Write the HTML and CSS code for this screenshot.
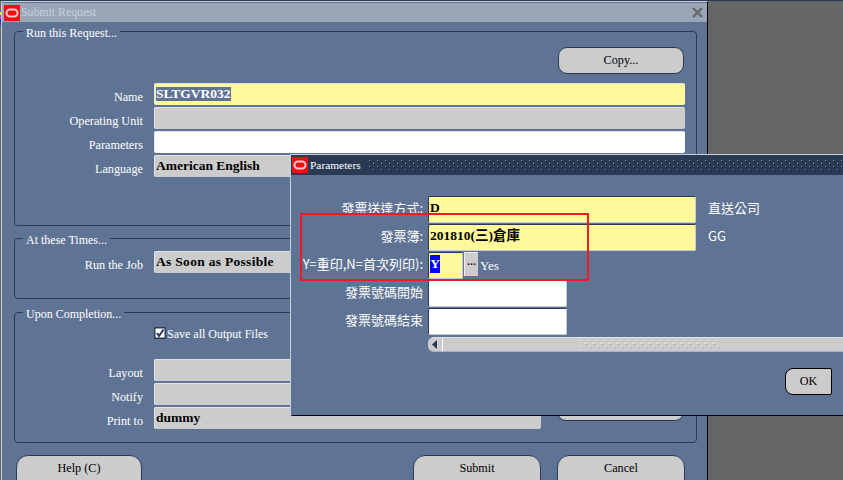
FILE: index.html
```html
<!DOCTYPE html>
<html lang="zh-Hant">
<head>
    <meta charset="UTF-8">
    <meta name="viewport" content="width=device-width, initial-scale=1.0">
    <title>Submit Request</title>
    <link rel="stylesheet" href="styles.css">
</head>
<body>
    <div class="desktop">
        <div class="edge-pixels"></div>

        <div class="window main-window">
            <div class="titlebar inactive">
                <svg class="oracle-icon" viewBox="0 0 16 16"><rect width="16" height="16" fill="#f00f0f"/><rect x="2.5" y="4.5" width="11" height="7" rx="3.5" fill="none" stroke="#ffc8c8" stroke-width="2"/></svg>
                <span class="title-text">Submit Request</span>
                <svg class="close-icon" viewBox="0 0 11 11"><path d="M1 1L10 10M10 1L1 10" stroke="#666" stroke-width="2.4" fill="none"/></svg>
            </div>
            <div class="main-body">
                <fieldset class="group group-run">
                    <legend>Run this Request...</legend>
                    <div class="copy-row"><button class="btn btn-copy">Copy...</button></div>
                    <div class="form-rows">
                        <div class="row"><label>Name</label><div class="field yellow bold"><span class="selected">SLTGVR032</span></div></div>
                        <div class="row"><label>Operating Unit</label><div class="field gray"></div></div>
                        <div class="row"><label>Parameters</label><div class="field white"></div></div>
                        <div class="row"><label>Language</label><div class="field gray bold">American English</div></div>
                    </div>
                </fieldset>

                <fieldset class="group group-times">
                    <legend>At these Times...</legend>
                    <div class="form-rows">
                        <div class="row"><label>Run the Job</label><div class="field gray bold wide-text">As Soon as Possible</div></div>
                    </div>
                </fieldset>

                <fieldset class="group group-done">
                    <legend>Upon Completion...</legend>
                    <div class="check-row">
                        <svg class="checkbox" viewBox="0 0 12 12"><rect width="12" height="12" fill="#2a3a55"/><rect x="1.5" y="1.5" width="9" height="9" fill="#fff"/><path d="M3 6L5 9L9.5 2.5" stroke="#2a3a55" stroke-width="2" fill="none"/></svg>
                        <span class="check-label">Save all Output Files</span>
                    </div>
                    <div class="done-grid">
                        <div class="form-rows">
                            <div class="row"><label>Layout</label><div class="field gray"></div></div>
                            <div class="row"><label>Notify</label><div class="field gray"></div></div>
                            <div class="row"><label>Print to</label><div class="field gray bold">dummy</div></div>
                        </div>
                        <button class="btn btn-options"></button>
                    </div>
                </fieldset>

                <div class="footer-buttons">
                    <button class="btn btn-help">Help (C)</button>
                    <span class="spacer"></span>
                    <button class="btn btn-wide">Submit</button>
                    <button class="btn btn-wide">Cancel</button>
                </div>
            </div>
        </div>

        <div class="window param-window">
            <div class="titlebar active">
                <svg class="oracle-icon" viewBox="0 0 16 16"><rect width="16" height="16" fill="#f00f0f"/><rect x="2.5" y="4.5" width="11" height="7" rx="3.5" fill="none" stroke="#ffc8c8" stroke-width="2"/></svg>
                <span class="title-text">Parameters</span>
                <span class="dots"></span>
            </div>
            <div class="param-body">
                <div class="param-row">
                    <label>發票送達方式:</label>
                    <div class="pfield pfield-long yellow bold">D</div>
                    <span class="desc">直送公司</span>
                </div>
                <div class="param-row">
                    <label>發票簿:</label>
                    <div class="pfield pfield-long yellow bold">201810(三)倉庫</div>
                    <span class="desc">GG</span>
                </div>
                <div class="param-row">
                    <label>Y=重印,N=首次列印):</label>
                    <div class="pfield pfield-short yellow bold"><span class="selected-blue">Y</span></div>
                    <button class="lov-btn">...</button>
                    <span class="yes-text">Yes</span>
                </div>
                <div class="param-row">
                    <label>發票號碼開始</label>
                    <div class="pfield pfield-mid white"></div>
                </div>
                <div class="param-row">
                    <label>發票號碼結束</label>
                    <div class="pfield pfield-mid white"></div>
                </div>
                <div class="scrollbar">
                    <div class="scroll-arrow"><svg viewBox="0 0 6 9" width="6" height="9"><path d="M5 0V9L0 4.5Z" fill="#2a3a55"/></svg></div>
                    <div class="scroll-track"><span class="scroll-grip"></span></div>
                </div>
                <div class="ok-row"><button class="btn btn-ok">OK</button></div>
            </div>
        </div>

        <div class="annotation"></div>
    </div>
</body>
</html>
```

FILE: styles.css
```css
* {
    box-sizing: border-box;
}
body {
    margin: 0;
    background: #666;
    font-family: "Liberation Serif", "Noto Sans CJK TC", serif;
    font-size: 12.2px;
    color: #fff;
}
label {
    white-space: nowrap;
}
.desktop {
    position: relative;
    width: 843px;
    height: 480px;
    overflow: hidden;
    background: #666;
    border-top: 1px solid #2a3a55;
}
.edge-pixels {
    position: absolute;
    left: 0;
    top: 11px;
    width: 1px;
    height: 13px;
    background: linear-gradient(#ffe600 0 3px, #e020c0 3px 7px, #2030c0 7px);
}

/* windows */
.window {
    position: absolute;
    background: #5f7494;
}
.main-window {
    left: 1px;
    top: 0;
    width: 707px;
    height: 480px;
    border-top: 1px solid #c8d0dc;
    border-left: 1px solid #c8d0dc;
    border-right: 1px solid #000;
}
.param-window {
    left: 290px;
    top: 153px;
    width: 570px;
    height: 262px;
    border-top: 1px solid #c8d0dc;
    border-left: 1px solid #c8d0dc;
    border-bottom: 1px solid #000;
    border-bottom-left-radius: 3px;
}
.titlebar {
    display: flex;
    align-items: center;
    height: 20px;
    padding-left: 1px;
}
.titlebar.inactive {
    background: #98a6b8;
    color: #c9cfd8;
}
.titlebar.active {
    background: #2a3a55;
    color: #fff;
}
.main-window .titlebar {
    height: 19px;
    margin-top: 1px;
    padding-left: 2px;
}
.oracle-icon {
    width: 16px;
    height: 16px;
    flex: none;
}
.title-text {
    margin-left: 1px;
    font-size: 11.8px;
}
.param-window .title-text {
    font-size: 11.4px;
    margin-left: 2px;
}
.close-icon {
    width: 11px;
    height: 11px;
    margin-left: auto;
    margin-right: 4px;
}
.dots {
    flex: 1;
    height: 11px;
    margin-left: 8px;
    background-image:
        radial-gradient(circle at 0.5px 0.5px, #8a97ab 0.7px, transparent 0.8px),
        radial-gradient(circle at 1.5px 1.5px, #0d1626 0.7px, transparent 0.8px),
        radial-gradient(circle at 0.5px 0.5px, #8a97ab 0.7px, transparent 0.8px),
        radial-gradient(circle at 1.5px 1.5px, #0d1626 0.7px, transparent 0.8px);
    background-size: 8px 6px;
    background-position: 0 0, 0 0, 4px 3px, 4px 3px;
}

/* main window */
.main-body {
    display: flex;
    flex-direction: column;
    padding: 0 10px 0 12px;
}
.group {
    margin: 0;
    padding: 0;
    min-width: 0;
    border: 1px solid #2a3a55;
    border-radius: 4px;
}
.group legend {
    margin-left: 8px;
    padding: 4px 3px 0;
    line-height: 15px;
    font-size: 12px;
}
.group-run {
    height: 204px;
}
.group-times {
    height: 70px;
    margin-top: 3px;
}
.group-done {
    height: 140px;
    margin-top: 4px;
}
.copy-row {
    display: flex;
    justify-content: flex-end;
    padding: 6px 12px 0 0;
}
.form-rows {
    display: flex;
    flex-direction: column;
    gap: 2px;
    flex: 1;
}
.group-run .form-rows {
    margin-top: 9px;
    padding-right: 11px;
}
.group-times .form-rows {
    margin-top: 3px;
    padding-right: 11px;
}
.row {
    display: flex;
    align-items: center;
    height: 22px;
}
.row label {
    width: 128px;
    flex: none;
    margin-right: 11px;
    text-align: right;
    padding-top: 6px;
}
.field {
    flex: 1;
    height: 22px;
    border-top: 1px solid #dfe4ea;
    border-left: 1px solid #dfe4ea;
    border-radius: 2px;
    padding-left: 1px;
    line-height: 20px;
    white-space: nowrap;
    overflow: hidden;
}
.yellow {
    background: #fff99c;
}
.gray {
    background: #ccc;
}
.white {
    background: #fff;
}
.bold {
    color: #000;
    font-weight: bold;
    font-size: 13.5px;
}
.wide-text {
    letter-spacing: 0.3px;
}
.selected {
    display: inline-block;
    background: #5f7494;
    color: #fff;
    height: 14px;
    line-height: 14px;
}
.check-row {
    display: flex;
    align-items: center;
    height: 16px;
    margin-top: 3px;
    padding-left: 139px;
    font-size: 12px;
}
.check-label {
    padding-top: 3px;
}
.checkbox {
    width: 12px;
    height: 12px;
    margin-right: 1px;
}
.done-grid {
    display: flex;
    align-items: flex-end;
    gap: 16px;
    margin-top: 18px;
    padding-right: 12px;
}
.btn {
    height: 27px;
    padding: 0;
    border: 1px solid #2a3a55;
    border-radius: 9px;
    background: #ccc;
    color: #000;
    font-family: "Liberation Serif", serif;
    font-size: 12.2px;
}
.btn-copy {
    width: 126px;
}
.btn-wide {
    flex: none;
    width: 128px;
}
.btn-options {
    flex: none;
    width: 127px;
    margin-bottom: 8px;
}
.footer-buttons {
    display: flex;
    gap: 16px;
    margin-top: 12px;
    padding-left: 2px;
    padding-right: 12px;
}
.footer-buttons .btn {
    border-radius: 12px 12px 0 0;
}
.btn-help {
    width: 126px;
}
.spacer {
    flex: 1;
}

/* parameter window */
.param-body {
    display: flex;
    flex-direction: column;
    padding-top: 20px;
}
.param-row {
    display: flex;
    align-items: center;
    height: 28px;
}
.param-row label {
    width: 132px;
    flex: none;
    margin-right: 5px;
    padding-bottom: 2px;
    text-align: right;
    font-family: "Noto Sans CJK TC", sans-serif;
    font-size: 13px;
    line-height: 16px;
}
.pfield {
    height: 27px;
    border: 1px solid;
    border-color: #2a3a55 #c4ccd8 #c4ccd8 #2a3a55;
    border-radius: 2px;
    padding: 2px 1px 0;
    line-height: 18px;
}
.pfield-long {
    width: 268px;
}
.pfield-short {
    width: 35px;
}
.pfield-mid {
    width: 139px;
}
.desc {
    margin-left: 12px;
    padding-bottom: 3px;
    font-family: "Noto Sans CJK TC", sans-serif;
    font-size: 13px;
}
.selected-blue {
    display: inline-block;
    width: 10px;
    background: #00f;
    color: #fff;
    text-align: center;
}
.lov-btn {
    width: 14px;
    height: 24px;
    margin: -3px 0 0 1px;
    padding: 0 0 6px;
    border: none;
    border-left: 1px solid #eee;
    border-top: 1px solid #eee;
    background: #ccc;
    color: #401010;
    font: bold 11px "Liberation Sans", sans-serif;
}
.yes-text {
    margin-left: 2px;
    padding-top: 2px;
    font-size: 13px;
}
.scrollbar {
    display: flex;
    height: 15px;
    margin: 2px 0 0 137px;
    border-top: 1px solid #dfe4ea;
    border-bottom: 1px solid #a8b4c4;
    border-radius: 6px 0 0 6px;
    background: #ccc;
}
.scroll-arrow {
    display: flex;
    align-items: center;
    justify-content: center;
    width: 15px;
    border-right: 1px solid #fff;
}
.scroll-track {
    flex: 1;
    padding: 2px 0 0 138px;
}
.scroll-grip {
    display: block;
    width: 140px;
    height: 8px;
    background-image:
        radial-gradient(circle at 0.5px 0.5px, #fff 0.7px, transparent 0.8px),
        radial-gradient(circle at 1.5px 1.5px, #9aa3ad 0.7px, transparent 0.8px),
        radial-gradient(circle at 0.5px 0.5px, #fff 0.7px, transparent 0.8px),
        radial-gradient(circle at 1.5px 1.5px, #9aa3ad 0.7px, transparent 0.8px);
    background-size: 8px 6px;
    background-position: 0 0, 0 0, 4px 3px, 4px 3px;
}
.ok-row {
    padding: 16px 0 0 494px;
}
.btn-ok {
    width: 47px;
    height: 27px;
    border: 1px solid #000;
    border-radius: 8px 2px 2px 8px;
}

/* red box drawn over the screenshot */
.annotation {
    position: absolute;
    left: 300px;
    top: 212px;
    width: 289px;
    height: 68px;
    border: 2px solid #ed1c24;
}
```
